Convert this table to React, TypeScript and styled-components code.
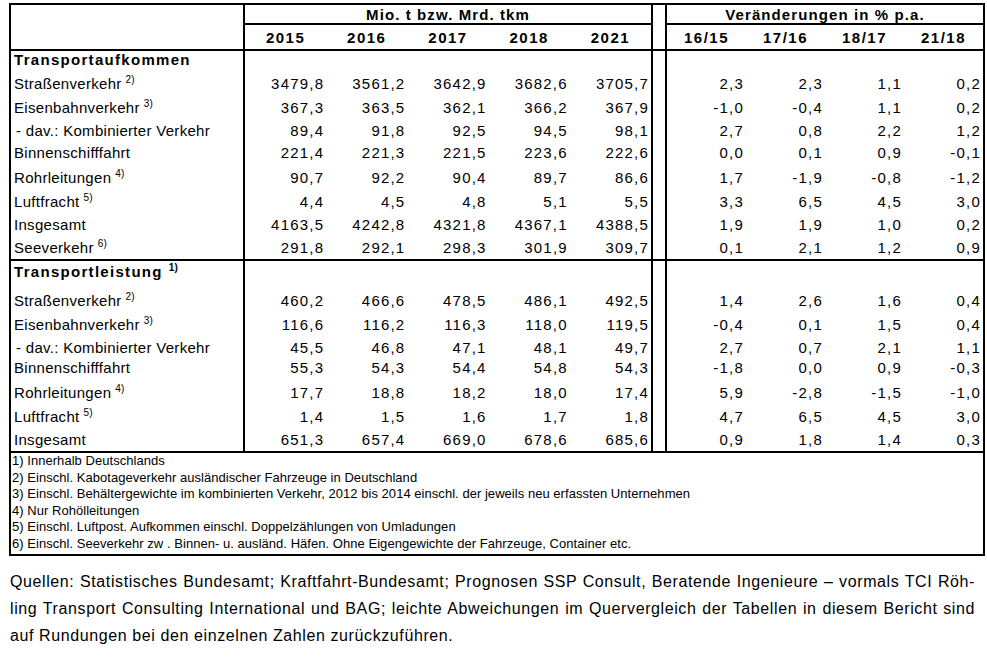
import React from "react";
import styled, { createGlobalStyle } from "styled-components";

const GlobalStyle = createGlobalStyle`
  html, body { margin: 0; padding: 0; background: #fff; }
  body { font-family: "Liberation Sans", Arial, sans-serif; color: #000; }
  * { box-sizing: border-box; }
`;

const Page = styled.div`
  width: 987px;
  padding: 3px 0 0 9px;
`;

const Table = styled.div`
  width: 976px;
  border: 2px solid #000;
`;

const Section = styled.div`
  border-bottom: 2px solid #000;
`;

const Row = styled.div<{ $h: number }>`
  display: grid;
  grid-template-columns: 234px 408px 14px 316px;
  height: ${({ $h }) => $h}px;
`;

const LabelCell = styled.div<{ $bold?: boolean; $indent?: boolean }>`
  border-right: 2px solid #000;
  display: flex;
  align-items: flex-end;
  padding: 0 0 2px ${({ $indent }) => ($indent ? 5 : 3)}px;
  font-size: 15px;
  line-height: 18px;
  font-weight: ${({ $bold }) => ($bold ? 700 : 400)};
  letter-spacing: ${({ $bold }) => ($bold ? "1.3px" : "0.3px")};
  white-space: nowrap;
`;

const LabelText = styled.span`
  display: inline;
`;

const Group = styled.div<{ $cols: number; $edge?: boolean }>`
  display: grid;
  grid-template-columns: repeat(${({ $cols }) => $cols}, 1fr);
  border-right: ${({ $edge }) => ($edge ? "2px solid #000" : "none")};
`;

const GapCell = styled.div`
  border-right: 2px solid #000;
`;

const Num = styled.div`
  display: flex;
  align-items: flex-end;
  justify-content: flex-end;
  padding: 0 2px 2px 0;
  font-size: 15px;
  line-height: 18px;
  letter-spacing: 1.2px;
  white-space: nowrap;
`;

const GroupTitle = styled.div<{ $edge?: boolean }>`
  display: flex;
  align-items: center;
  justify-content: center;
  border-bottom: 2px solid #000;
  border-right: ${({ $edge }) => ($edge ? "2px solid #000" : "none")};
  font-size: 15px;
  font-weight: 700;
  letter-spacing: 1.1px;
  white-space: nowrap;
`;

const ColHead = styled.div`
  display: flex;
  align-items: center;
  justify-content: center;
  font-size: 15px;
  font-weight: 700;
  letter-spacing: 1.5px;
  padding-top: 1px;
`;

const Sup = styled.sup`
  font-size: 10px;
  line-height: 0;
  vertical-align: 6px;
  margin-left: 4px;
  letter-spacing: 0.2px;
  font-weight: 400;
`;

const BoldSup = styled(Sup)`
  font-weight: 700;
  margin-left: 6px;
`;

const Notes = styled.div`
  padding: 0 0 1px 1px;
  font-size: 13px;
  line-height: 16.6px;
  letter-spacing: 0.04px;
`;

const NoteLine = styled.div`
  white-space: nowrap;
`;

const Source = styled.div`
  margin: 12px 0 0 1px;
  width: 965px;
  font-size: 16px;
  line-height: 27px;
  letter-spacing: 0.6px;
`;

const SourceLine = styled.div<{ $justify?: boolean }>`
  white-space: nowrap;
  text-align: ${({ $justify }) => ($justify ? "justify" : "left")};
  text-align-last: ${({ $justify }) => ($justify ? "justify" : "left")};
`;

type DataRow = {
  label: string;
  sup?: string;
  indent?: boolean;
  h: number;
  v: string[];
  p: string[];
};

type SectionData = {
  title: string;
  titleSup?: string;
  titleH: number;
  rows: DataRow[];
};

const sections: SectionData[] = [
  {
    title: "Transportaufkommen",
    titleH: 20,
    rows: [
      { label: "Straßenverkehr", sup: "2)", h: 24, v: ["3479,8", "3561,2", "3642,9", "3682,6", "3705,7"], p: ["2,3", "2,3", "1,1", "0,2"] },
      { label: "Eisenbahnverkehr", sup: "3)", h: 24, v: ["367,3", "363,5", "362,1", "366,2", "367,9"], p: ["-1,0", "-0,4", "1,1", "0,2"] },
      { label: "- dav.: Kombinierter Verkehr", indent: true, h: 23, v: ["89,4", "91,8", "92,5", "94,5", "98,1"], p: ["2,7", "0,8", "2,2", "1,2"] },
      { label: "Binnenschifffahrt", h: 22, v: ["221,4", "221,3", "221,5", "223,6", "222,6"], p: ["0,0", "0,1", "0,9", "-0,1"] },
      { label: "Rohrleitungen", sup: "4)", h: 25, v: ["90,7", "92,2", "90,4", "89,7", "86,6"], p: ["1,7", "-1,9", "-0,8", "-1,2"] },
      { label: "Luftfracht", sup: "5)", h: 24, v: ["4,4", "4,5", "4,8", "5,1", "5,5"], p: ["3,3", "6,5", "4,5", "3,0"] },
      { label: "Insgesamt", h: 23, v: ["4163,5", "4242,8", "4321,8", "4367,1", "4388,5"], p: ["1,9", "1,9", "1,0", "0,2"] },
      { label: "Seeverkehr", sup: "6)", h: 23, v: ["291,8", "292,1", "298,3", "301,9", "309,7"], p: ["0,1", "2,1", "1,2", "0,9"] },
    ],
  },
  {
    title: "Transportleistung",
    titleSup: "1)",
    titleH: 22,
    rows: [
      { label: "Straßenverkehr", sup: "2)", h: 29, v: ["460,2", "466,6", "478,5", "486,1", "492,5"], p: ["1,4", "2,6", "1,6", "0,4"] },
      { label: "Eisenbahnverkehr", sup: "3)", h: 24, v: ["116,6", "116,2", "116,3", "118,0", "119,5"], p: ["-0,4", "0,1", "1,5", "0,4"] },
      { label: "- dav.: Kombinierter Verkehr", indent: true, h: 23, v: ["45,5", "46,8", "47,1", "48,1", "49,7"], p: ["2,7", "0,7", "2,1", "1,1"] },
      { label: "Binnenschifffahrt", h: 20, v: ["55,3", "54,3", "54,4", "54,8", "54,3"], p: ["-1,8", "0,0", "0,9", "-0,3"] },
      { label: "Rohrleitungen", sup: "4)", h: 25, v: ["17,7", "18,8", "18,2", "18,0", "17,4"], p: ["5,9", "-2,8", "-1,5", "-1,0"] },
      { label: "Luftfracht", sup: "5)", h: 24, v: ["1,4", "1,5", "1,6", "1,7", "1,8"], p: ["4,7", "6,5", "4,5", "3,0"] },
      { label: "Insgesamt", h: 23, v: ["651,3", "657,4", "669,0", "678,6", "685,6"], p: ["0,9", "1,8", "1,4", "0,3"] },
    ],
  },
];

const years = ["2015", "2016", "2017", "2018", "2021"];
const periods = ["16/15", "17/16", "18/17", "21/18"];

const notes = [
  "1) Innerhalb Deutschlands",
  "2) Einschl. Kabotageverkehr ausländischer Fahrzeuge in Deutschland",
  "3) Einschl. Behältergewichte im kombinierten Verkehr, 2012 bis 2014 einschl. der jeweils neu erfassten Unternehmen",
  "4) Nur Rohölleitungen",
  "5) Einschl. Luftpost. Aufkommen einschl. Doppelzählungen von Umladungen",
  "6) Einschl. Seeverkehr zw . Binnen- u. ausländ. Häfen. Ohne Eigengewichte der Fahrzeuge, Container etc.",
];

export default function App() {
  return (
    <>
      <GlobalStyle />
      <Page>
        <Table>
          <Section>
            <Row $h={20}>
              <LabelCell />
              <GroupTitle $edge>Mio. t bzw. Mrd. tkm</GroupTitle>
              <GapCell />
              <GroupTitle>Veränderungen in % p.a.</GroupTitle>
            </Row>
            <Row $h={24}>
              <LabelCell />
              <Group $cols={5} $edge>
                {years.map((y) => (
                  <ColHead key={y}>{y}</ColHead>
                ))}
              </Group>
              <GapCell />
              <Group $cols={4}>
                {periods.map((p) => (
                  <ColHead key={p}>{p}</ColHead>
                ))}
              </Group>
            </Row>
          </Section>
          {sections.map((s) => (
            <Section key={s.title}>
              <Row $h={s.titleH}>
                <LabelCell $bold>
                  <LabelText>
                    {s.title}
                    {s.titleSup && <BoldSup>{s.titleSup}</BoldSup>}
                  </LabelText>
                </LabelCell>
                <Group $cols={5} $edge />
                <GapCell />
                <Group $cols={4} />
              </Row>
              {s.rows.map((r, i) => (
                <Row key={i} $h={r.h}>
                  <LabelCell $indent={r.indent}>
                    <LabelText>
                      {r.label}
                      {r.sup && <Sup>{r.sup}</Sup>}
                    </LabelText>
                  </LabelCell>
                  <Group $cols={5} $edge>
                    {r.v.map((v, j) => (
                      <Num key={j}>{v}</Num>
                    ))}
                  </Group>
                  <GapCell />
                  <Group $cols={4}>
                    {r.p.map((v, j) => (
                      <Num key={j}>{v}</Num>
                    ))}
                  </Group>
                </Row>
              ))}
            </Section>
          ))}
          <Notes>
            {notes.map((n) => (
              <NoteLine key={n}>{n}</NoteLine>
            ))}
          </Notes>
        </Table>
        <Source>
          <SourceLine $justify>
            Quellen: Statistisches Bundesamt; Kraftfahrt-Bundesamt; Prognosen SSP Consult, Beratende Ingenieure – vormals TCI Röh-
          </SourceLine>
          <SourceLine $justify>
            ling Transport Consulting International und BAG; leichte Abweichungen im Quervergleich der Tabellen in diesem Bericht sind
          </SourceLine>
          <SourceLine>auf Rundungen bei den einzelnen Zahlen zurückzuführen.</SourceLine>
        </Source>
      </Page>
    </>
  );
}
